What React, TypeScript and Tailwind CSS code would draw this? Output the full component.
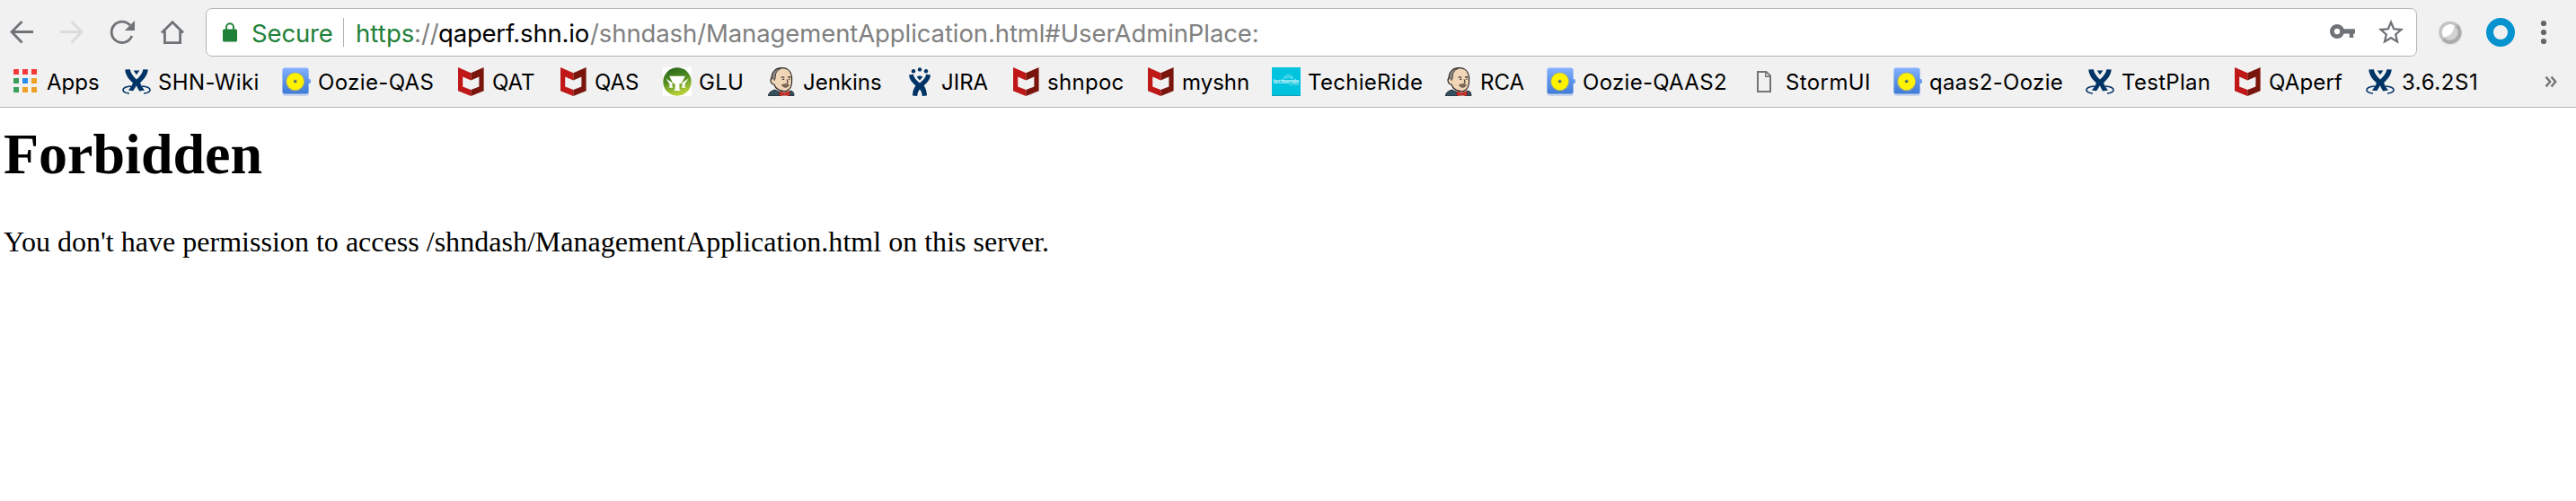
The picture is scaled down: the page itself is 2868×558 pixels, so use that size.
import React from "react";

const svgBox = "block h-8 w-8 shrink-0";

function BackIcon() {
  return (
    <svg className={svgBox} viewBox="0 0 32 32" fill="none" stroke="#6f7378" strokeWidth="2.8">
      <path d="M29 15.5H5M16.5 4 5 15.5 16.5 27.5" strokeLinecap="butt" />
    </svg>
  );
}

function ForwardIcon() {
  return (
    <svg className={svgBox} viewBox="0 0 32 32" fill="none" stroke="#dadbdc" strokeWidth="2.8">
      <path d="M3 15.5H27M15.5 4 27 15.5 15.5 27.5" />
    </svg>
  );
}

function ReloadIcon() {
  return (
    <svg className={svgBox} viewBox="0 0 32 32">
      <path d="M24.8 8.2A11.7 11.7 0 1 0 26.8 20" fill="none" stroke="#6f7378" strokeWidth="2.8" />
      <path d="M30 3V14H18.8Z" fill="#6f7378" />
    </svg>
  );
}

function HomeIcon() {
  return (
    <svg className={svgBox} viewBox="0 0 32 32" fill="none" stroke="#6f7378" strokeWidth="2.8">
      <path d="M4 16.6 16 4.8 28 16.6M7.4 14V27.6H24.6V14" />
    </svg>
  );
}

function LockIcon() {
  return (
    <svg className="block h-[22px] w-4 shrink-0" viewBox="0 0 16 22">
      <path d="M4 9V5.2a4 4 0 0 1 8 0V9" fill="none" stroke="#1f8038" strokeWidth="1.9" />
      <rect y="7.6" width="16" height="13.8" rx="1.5" fill="#1f8038" />
    </svg>
  );
}

function KeyIcon() {
  return (
    <svg className={svgBox} viewBox="0 0 32 32">
      <circle cx="10" cy="15" r="5.6" fill="none" stroke="#6f7378" strokeWidth="4.8" />
      <path d="M16.5 12.2H30V17.4H28.2V22H23.8V17.4H16.5Z" fill="#6f7378" />
    </svg>
  );
}

function StarIcon() {
  return (
    <svg className="block h-[34px] w-[34px] shrink-0" viewBox="0 0 24 24">
      <path
        fill="#6f7378"
        d="M22 9.24l-7.19-.62L12 2 9.19 8.63 2 9.24l5.46 4.73L5.82 21 12 17.27 18.18 21l-1.63-7.03L22 9.24zM12 15.4l-3.76 2.27 1-4.28-3.32-2.88 4.38-.38L12 6.1l1.71 4.04 4.38.38-3.32 2.88 1 4.28L12 15.4z"
      />
    </svg>
  );
}

function BallIcon() {
  return (
    <svg className={svgBox} viewBox="0 0 32 32">
      <circle cx="15.7" cy="16.6" r="14" fill="#e2e2e2" />
      <circle cx="15.7" cy="16" r="13.6" fill="#fafafa" />
      <circle cx="15.7" cy="16" r="12.6" fill="#c4c4c4" />
      <path d="M24.6 7.1A12.6 12.6 0 1 1 6.8 24.9Z" fill="#acacac" />
      <circle cx="15.7" cy="16" r="8.8" fill="#d2d2d2" />
      <path d="M7 17.4A8.8 8.8 0 0 1 20.4 8.6C20.8 15.6 15 21.4 8.6 21.2A8.8 8.8 0 0 1 7 17.4Z" fill="#fff" />
    </svg>
  );
}

function RingIcon() {
  return (
    <svg className={svgBox} viewBox="0 0 32 32">
      <circle cx="16" cy="16" r="12" fill="none" stroke="#0793cf" strokeWidth="8" />
    </svg>
  );
}

function DotsIcon() {
  return (
    <svg className={svgBox} viewBox="0 0 32 32" fill="#62666a">
      <circle cx="16" cy="6" r="3.1" />
      <circle cx="16" cy="16" r="3.1" />
      <circle cx="16" cy="26" r="3.1" />
    </svg>
  );
}

function AppsIcon() {
  const colors = ["#f4383a", "#f4383a", "#f4383a", "#3a9e5a", "#2b8cf0", "#f0a024", "#3a9e5a", "#f0a024", "#f0a024"];
  return (
    <svg className={svgBox} viewBox="0 0 32 32">
      {colors.map((c, i) => (
        <rect key={i} x={3 + (i % 3) * 10} y={2 + Math.floor(i / 3) * 10} width="6" height="6" fill={c} />
      ))}
    </svg>
  );
}

function ConfluenceIcon() {
  return (
    <svg className={svgBox} viewBox="0 0 32 32">
      <g fill="#003366">
        <path d="M3.2 2.6 8.8 2.2C9.6 6.6 12.4 10.4 16 13.4 19.8 10.2 22.6 6.6 23.4 2.2L28.8 2.6C28 9 24.4 13.4 20 17.2 21.4 20.4 22.8 23 25 25.4L19.2 26.4C17.8 24.4 16.6 22.2 15.8 20.2 14.6 22.4 13.4 24.6 12 26.2L6.800 25.600C9 23 10.600 20.400 12 17.400 7.400 13.600 4 9.200 3.200 2.600Z" />
        <path d="M12.600 3.600H19.400L16 8.200Z" />
      </g>
      <path
        d="M10 21C4 21.200 0.400 23.200 1 25.800 1.600 27.600 4.200 28.800 8 29M22 21C28 21.200 31.600 23.200 31 25.800 30.400 27.600 27.800 28.800 24 29"
        fill="none"
        stroke="#003366"
        strokeWidth="1.500"
      />
    </svg>
  );
}

function OozieIcon() {
  return (
    <svg className={svgBox} viewBox="0 0 32 32">
      <defs>
        <linearGradient id="oozieBlue" x1="0" y1="0" x2="0" y2="1">
          <stop offset="0" stopColor="#86b2ff" />
          <stop offset="0.45" stopColor="#5f95ea" />
          <stop offset="1" stopColor="#3f7bd6" />
        </linearGradient>
      </defs>
      <rect x="0.500" y="2" width="29.500" height="30" rx="3" fill="#c9d6ee" />
      <rect x="28" y="13" width="4" height="5" rx="1.500" fill="#6c9cf0" />
      <rect x="0.500" y="0.500" width="29" height="29" rx="2.500" fill="url(#oozieBlue)" />
      <circle cx="14.700" cy="16" r="10.600" fill="#a8a878" opacity="0.700" />
      <circle cx="14.700" cy="15.800" r="9.600" fill="#fff200" />
      <circle cx="14.700" cy="15.600" r="2.200" fill="#b5b030" />
      <circle cx="14.700" cy="15.600" r="1.200" fill="#24509a" />
    </svg>
  );
}

function McAfeeIcon() {
  return (
    <svg className={svgBox} viewBox="0 0 32 32">
      <path d="M2 0 16.300 6.200V14.600L7.200 10.600V21.400L16.300 25V32L2 26.200Z" fill="#c01818" />
      <path d="M30.600 0 16.300 6.200V14.600L25.400 10.600V21.400L16.300 25V32L30.600 26.200Z" fill="#7a150d" />
    </svg>
  );
}

function GluIcon() {
  return (
    <svg className={svgBox} viewBox="0 0 32 32">
      <defs>
        <linearGradient id="gluGreen" x1="0" y1="0" x2="0.300" y2="1">
          <stop offset="0" stopColor="#23601a" />
          <stop offset="0.500" stopColor="#4f8c22" />
          <stop offset="1" stopColor="#b4cf36" />
        </linearGradient>
      </defs>
      <rect width="32" height="32" fill="#fff" />
      <circle cx="16" cy="16" r="15.700" fill="url(#gluGreen)" />
      <g fill="#fff">
        <path d="M7.200 9.800H24.800L20.800 17.400 18.400 18.600V24.600L20 26H12L13.600 24.600V18.600L11.200 17.400Z" />
        <path d="M3.400 12.600 10.600 17.200 10.400 21.600 11.400 22.800H6.400L7.600 21.400 7.400 18.400Z" />
        <path d="M28.600 12.600 21.400 17.200 21.600 21.600 20.600 22.800H25.600L24.400 21.400 24.600 18.400Z" />
      </g>
    </svg>
  );
}

function JenkinsIcon() {
  return (
    <svg className={svgBox} viewBox="0 0 32 32">
      <path
        d="M5 12.600C5 5 9.600 0.700 16.500 0.700 23.500 0.700 27.400 5.500 27.600 12.500 27.900 18.500 27 25 21.500 26.400 15 27.400 9.600 24.400 7.800 19 4.400 19 3 13.400 5 12.600Z"
        fill="#f0d6b7"
        stroke="#2b2522"
        strokeWidth="1.200"
      />
      <path d="M5.400 12C4.800 5.500 9.500 1 15.600 1.200 11.600 2.800 9.600 5.400 9.400 9 9.400 11.400 8.800 13 8.200 14.500 7.400 12.600 6.400 12.200 5.400 12Z" fill="#8f8b87" stroke="#2b2522" strokeWidth="0.800" />
      <path d="M15.600 11.600C17 10.400 18.400 10.600 19.200 11.800M23 11.200C24 10.400 25.400 10.600 26.200 11.600M17.200 13.400H19.200M23.800 13.200H25.600M21.800 13.500C23.200 15.400 23.800 17 21.800 17.600" fill="none" stroke="#3a2e28" strokeWidth="1.100" />
      <path d="M16.600 19.800C19 18.500 22.200 18.600 24.200 19.400 23.800 22.500 18.600 23.400 16.600 19.800Z" fill="#8c7364" stroke="#4a3a32" strokeWidth="0.900" />
      <path d="M1.600 32C1.400 28.600 3.600 26.600 8.800 25L14.500 28 16.500 32Z" fill="#335061" stroke="#222" strokeWidth="0.900" />
      <path d="M24 27.500 26.800 26C29.400 27 30.200 29 29.800 32H23Z" fill="#335061" stroke="#222" strokeWidth="0.900" />
      <path d="M14.200 28.500 24.500 27 24 32H15Z" fill="#e6e9eb" />
      <path d="M14 27 19.200 28.600 25 26.600V32L19.600 30.600 14 32Z" fill="#dc3226" stroke="#7a1712" strokeWidth="0.700" />
      <circle cx="19.400" cy="29.600" r="1.700" fill="#ef3d3a" stroke="#7a1712" strokeWidth="0.600" />
    </svg>
  );
}

function JiraIcon() {
  return (
    <svg className={svgBox} viewBox="0 0 32 32" fill="#003366">
      <circle cx="9" cy="4.200" r="2.200" />
      <circle cx="16" cy="2.400" r="2.200" />
      <circle cx="23" cy="4.200" r="2.200" />
      <path d="M12.600 10.600 16 9.200 19.400 10.600 16 14.400Z" />
      <path d="M4 8.400 8.800 7.800C9.400 11.600 12.400 14.600 16 17.400 19.600 14.600 22.600 11.600 23.200 7.800L28 8.400C27.600 13.600 24 17.400 20.600 20.400 22.800 23.200 23.800 27 24 31.400L18.800 32C18.600 29 17.600 26.600 16 24.600 14.400 26.600 13.400 29 13.200 32L8 31.400C8.200 27 9.200 23.200 11.400 20.400 8 17.400 4.400 13.600 4 8.400Z" />
    </svg>
  );
}

function TechieRideIcon() {
  return (
    <svg className={svgBox} viewBox="0 0 32 32">
      <rect width="32" height="32" fill="#00c3df" />
      <rect y="31" width="32" height="1" fill="#149cb4" />
      <path d="M13.600 12.500C13.200 10.500 15 9.800 16 10.200 17.200 7.800 20 7.800 21 10.200 22.600 9.800 24 10.800 23.400 12.600M15.600 12C17 10.600 20.600 10.600 21.800 12" fill="none" stroke="#b5f0f7" strokeWidth="0.800" />
      <text x="1.500" y="17.600" fontSize="6" fontWeight="600" fontFamily="Inter, sans-serif" fill="#e6fbfd" textLength="29">
        techieride
      </text>
      <rect x="19" y="19.200" width="11" height="0.700" fill="#7fe0ee" />
    </svg>
  );
}

function PageIcon() {
  return (
    <svg className={svgBox} viewBox="0 0 32 32" fill="none" stroke="#737373" strokeWidth="2">
      <path d="M9 5H18.500L23 9.500V27H9Z" />
      <path d="M17.700 5V10.300H23" strokeWidth="1.400" />
    </svg>
  );
}

type Bookmark = { label: string; icon: () => React.ReactElement; cls: string };

const bookmarks: Bookmark[] = [
  { label: "Apps", icon: AppsIcon, cls: "w-[124px]" },
  { label: "SHN-Wiki", icon: ConfluenceIcon, cls: "w-[178px] tracking-[0.4px]" },
  { label: "Oozie-QAS", icon: OozieIcon, cls: "w-[194px] tracking-[0.36px]" },
  { label: "QAT", icon: McAfeeIcon, cls: "w-[114px]" },
  { label: "QAS", icon: McAfeeIcon, cls: "w-[116px]" },
  { label: "GLU", icon: GluIcon, cls: "w-[116px] tracking-[0.3px]" },
  { label: "Jenkins", icon: JenkinsIcon, cls: "w-[154px]" },
  { label: "JIRA", icon: JiraIcon, cls: "w-[118px]" },
  { label: "shnpoc", icon: McAfeeIcon, cls: "w-[150px] tracking-[0.3px]" },
  { label: "myshn", icon: McAfeeIcon, cls: "w-[140px]" },
  { label: "TechieRide", icon: TechieRideIcon, cls: "w-[192px] tracking-[0.3px]" },
  { label: "RCA", icon: JenkinsIcon, cls: "w-[114px]" },
  { label: "Oozie-QAAS2", icon: OozieIcon, cls: "w-[226px] tracking-[0.3px]" },
  { label: "StormUI", icon: PageIcon, cls: "w-[160px] tracking-[0.4px]" },
  { label: "qaas2-Oozie", icon: OozieIcon, cls: "w-[214px] tracking-[0.34px]" },
  { label: "TestPlan", icon: ConfluenceIcon, cls: "w-[164px] tracking-[0.3px]" },
  { label: "QAperf", icon: McAfeeIcon, cls: "w-[148px] tracking-[0.15px]" },
  { label: "3.6.2S1", icon: ConfluenceIcon, cls: "w-[140px] tracking-[0.55px]" },
];

function AddressBar() {
  return (
    <div className="ml-[21px] flex h-[54px] w-[2462px] shrink-0 items-center rounded-[7px] border border-[#b4b4b4] bg-white pl-[18px] pr-[11px] text-[27.5px] leading-8">
      <LockIcon />
      <span className="ml-4 w-[102px] pt-0.5 tracking-[-0.15px] text-[#1f8038]">Secure</span>
      <span className="h-8 w-px shrink-0 bg-[#b0b0b0]" />
      <div className="ml-[13px] flex pt-0.5 text-[#808080]">
        <span className="w-[65px] tracking-[0.1px] text-[#1f8038]">https</span>
        <span className="w-[27px]">://</span>
        <span className="w-[169px] tracking-[-0.2px] text-black">qaperf.shn.io</span>
        <span className="tracking-[-0.1px]">/shndash/ManagementApplication.html#UserAdminPlace:</span>
      </div>
      <div className="ml-auto flex items-center gap-[21px]">
        <KeyIcon />
        <StarIcon />
      </div>
    </div>
  );
}

export default function App() {
  return (
    <div className="flex h-[558px] w-[2868px] flex-col overflow-hidden bg-white font-['Inter','Liberation_Sans',sans-serif]">
      <header className="h-[120px] shrink-0 border-b border-[#b5b5b5] bg-[#f1f1f1]">
        <div className="flex h-[63px] items-center pl-2 pt-[9px]">
          <nav className="flex gap-6">
            <BackIcon />
            <ForwardIcon />
            <ReloadIcon />
            <HomeIcon />
          </nav>
          <AddressBar />
          <div className="ml-[21px] flex items-center">
            <BallIcon />
            <div className="ml-6 flex gap-4">
              <RingIcon />
              <DotsIcon />
            </div>
          </div>
        </div>
        <div className="flex h-14 items-center pl-3 text-[24px] leading-8 text-black">
          {bookmarks.map(({ label, icon: Icon, cls }) => (
            <div key={label} className={"flex shrink-0 items-center gap-2 whitespace-nowrap " + cls}>
              <Icon />
              <span className="pt-0.5">{label}</span>
            </div>
          ))}
          <svg className="ml-[58px] block h-4 w-4 shrink-0" viewBox="0 0 16 16" fill="none" stroke="#737578" strokeWidth="2.400">
            <path d="M2.500 2.600 7.200 8 2.500 13.400M8.500 2.600 13.200 8 8.500 13.400" />
          </svg>
        </div>
      </header>
      <main className="pl-1 pt-4 font-['Liberation_Serif',serif] text-black">
        <h1 className="text-[64px] font-bold leading-[72px]">Forbidden</h1>
        <p className="mt-[43px] text-[32px] leading-9 tracking-[0.02px]">
          You don't have permission to access /shndash/ManagementApplication.html on this server.
        </p>
      </main>
    </div>
  );
}
